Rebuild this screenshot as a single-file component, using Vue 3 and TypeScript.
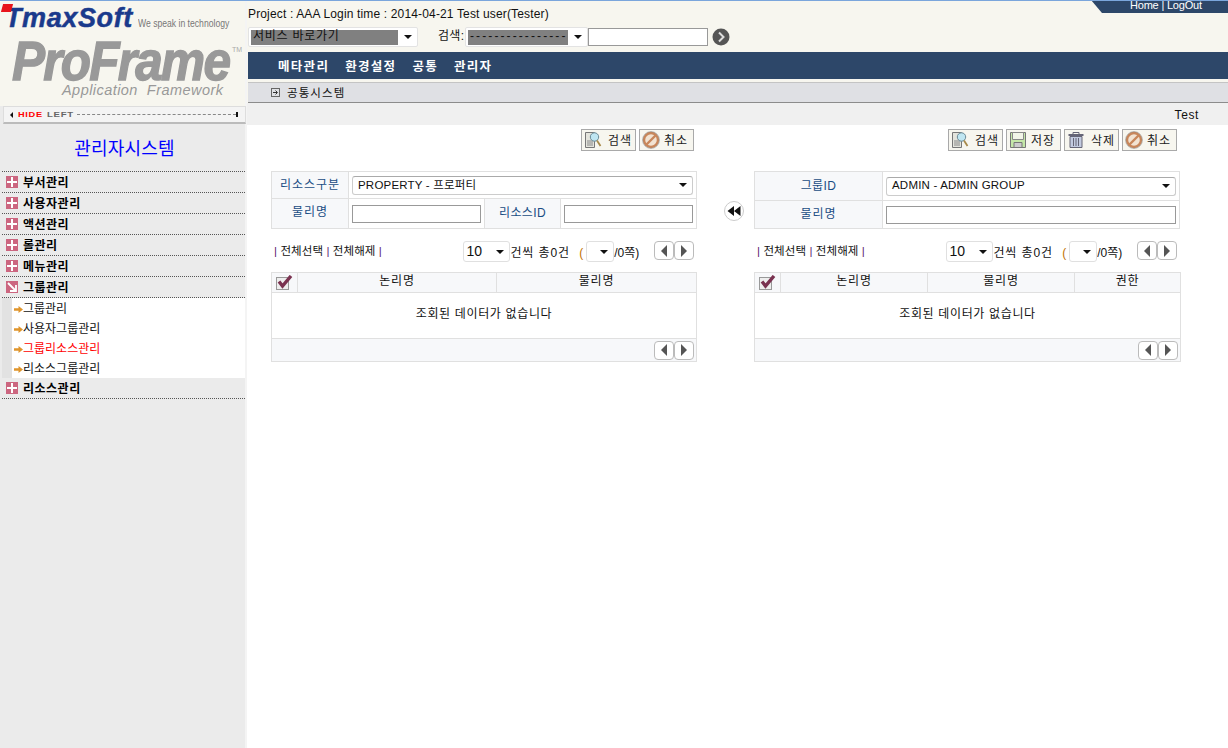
<script setup lang="ts">
interface Btn { label: string; icon: string }
const menusTop: string[] = ['부서관리', '사용자관리', '액션관리', '롤관리', '메뉴관리']
const subs: { label: string; active?: boolean }[] = [
  { label: '그룹관리' },
  { label: '사용자그룹관리' },
  { label: '그룹리소스관리', active: true },
  { label: '리소스그룹관리' },
]
const navs: string[] = ['메타관리', '환경설정', '공통', '관리자']
const leftBtns: Btn[] = [
  { label: '검색', icon: 'search' },
  { label: '취소', icon: 'cancel' },
]
const rightBtns: Btn[] = [
  { label: '검색', icon: 'search' },
  { label: '저장', icon: 'save' },
  { label: '삭제', icon: 'trash' },
  { label: '취소', icon: 'cancel' },
]
const panels = [
  { cols: [{ t: '논리명', w: 199 }, { t: '물리명', w: 200 }] },
  { cols: [{ t: '논리명', w: 147 }, { t: '물리명', w: 147 }, { t: '권한', w: 106 }] },
]
</script>

<template>
  <div class="page">
    <aside class="side">
      <div class="logo">
        <div class="tmax-row">
          <i class="red-mark"></i>
          <span class="tmax">TmaxSoft</span>
          <span class="slogan">We speak in technology</span>
        </div>
        <div class="pf-row">
          <span class="pf">ProFrame</span>
          <span class="tm">TM</span>
        </div>
        <div class="appfw">Application&nbsp; Framework</div>
      </div>
      <div class="hidebar">
        <i class="tri-l"></i>
        <b class="hide">HIDE</b>
        <b class="left">LEFT</b>
        <i class="dash"></i>
        <i class="endmark"></i>
      </div>
      <h1 class="sys">관리자시스템</h1>
      <nav class="menu">
        <div v-for="m in menusTop" :key="m" class="mrow">
          <svg class="micon" width="12" height="12" viewBox="0 0 12 12"><rect width="12" height="12" fill="#cc6680"/><path d="M5 1h2v4h4v2H7v4H5V7H1V5h4z" fill="#fff"/></svg>
          <span>{{ m }}</span>
        </div>
        <div class="mrow">
          <svg class="micon" width="12" height="12" viewBox="0 0 12 12"><rect width="12" height="12" fill="#cc6680"/><path d="M2 2l7 7M10 4v6H4" fill="none" stroke="#fff" stroke-width="1.800"/></svg>
          <span>그룹관리</span>
        </div>
        <ul class="subs">
          <li v-for="s in subs" :key="s.label" :class="{ on: s.active }">
            <svg width="9" height="7" viewBox="0 0 9 7"><path d="M0 2.200h4.500V0L9 3.500 4.500 7V4.800H0z" fill="#e0952c"/></svg>
            <span>{{ s.label }}</span>
          </li>
        </ul>
        <div class="mrow">
          <svg class="micon" width="12" height="12" viewBox="0 0 12 12"><rect width="12" height="12" fill="#cc6680"/><path d="M5 1h2v4h4v2H7v4H5V7H1V5h4z" fill="#fff"/></svg>
          <span>리소스관리</span>
        </div>
      </nav>
    </aside>

    <div class="content">
      <header class="head">
        <div class="info">Project : AAA Login time : 2014-04-21 Test user(Tester)</div>
        <div class="tools">
          <div class="sel svc"><span class="hl">서비스 바로가기</span></div>
          <span class="slabel">검색:</span>
          <div class="sel kind"><span class="hl">----------------</span></div>
          <input class="sinput" type="text" />
          <span class="go"><svg width="18" height="18" viewBox="0 0 18 18"><circle cx="9" cy="9" r="8.500" fill="#555"/><path d="M7 4.500l4.500 4.500L7 13.500" fill="none" stroke="#ddd" stroke-width="2"/></svg></span>
        </div>
        <div class="navbar">
          <a v-for="n in navs" :key="n">{{ n }}</a>
        </div>
        <div class="subnav">
          <svg width="9" height="9" viewBox="0 0 9 9"><rect x=".5" y=".5" width="8" height="8" fill="none" stroke="#666"/><path d="M2 4.500h4M4.500 2.500l2 2-2 2" fill="none" stroke="#333"/></svg>
          <span>공통시스템</span>
        </div>
        <div class="corner">
          <span>Home | LogOut</span>
        </div>
      </header>
      <div class="titlebar">Test</div>

      <main class="main">
        <template v-for="(p, pi) in panels" :key="pi">
          <section class="panel">
            <div class="actions">
              <button v-for="b in (pi === 0 ? leftBtns : rightBtns)" :key="b.label" class="btn" :class="b.icon" type="button">
                <svg v-if="b.icon === 'search'" width="18" height="18" viewBox="0 0 18 18"><path d="M1.500 1.500h9v15h-9z" fill="#e4e4dc" stroke="#777"/><path d="M3 10h6M3 12h6M3 14h6" stroke="#888"/><circle cx="10.500" cy="6" r="4.200" fill="#bfe6f2" stroke="#6b8a96"/><path d="M13 9.500l3.500 5.500" stroke="#a88a4a" stroke-width="1.800"/></svg>
                <svg v-else-if="b.icon === 'cancel'" width="18" height="18" viewBox="0 0 18 18"><circle cx="9" cy="9" r="7" fill="#f2e3d2" stroke="#c8865a" stroke-width="2.400"/><path d="M4.500 13.500l9-9" stroke="#c8865a" stroke-width="2.400"/><circle cx="9" cy="9" r="8.400" fill="none" stroke="#888" stroke-width=".6"/></svg>
                <svg v-else-if="b.icon === 'save'" width="18" height="18" viewBox="0 0 18 18"><path d="M1.500 1.500h15v15h-15z" fill="#c5e8a8" stroke="#777"/><path d="M3.500 1.500h11v7h-11z" fill="#f2f5e8" stroke="#888"/><path d="M5 16.500v-5h8v5z" fill="#ccc" stroke="#777"/></svg>
                <svg v-else width="18" height="18" viewBox="0 0 18 18"><path d="M1.500 4h15" stroke="#667" stroke-width="2"/><path d="M6 3V1.500h6V3" fill="none" stroke="#667"/><path d="M3 5.500h12v11H3z" fill="#c3cbe0" stroke="#667"/><path d="M6.500 7v8M9 7v8M11.500 7v8" stroke="#667"/></svg>
                <span>{{ b.label }}</span>
              </button>
            </div>

            <table v-if="pi === 0" class="form">
              <colgroup><col style="width:77px"/><col style="width:136px"/><col style="width:76px"/><col /></colgroup>
              <tbody>
                <tr class="r1">
                  <th>리소스구분</th>
                  <td colspan="3"><div class="sel fsel"><span>PROPERTY - 프로퍼티</span></div></td>
                </tr>
                <tr class="r2">
                  <th>물리명</th>
                  <td><input class="inp" type="text" /></td>
                  <th class="tight">리소스ID</th>
                  <td><input class="inp" type="text" /></td>
                </tr>
              </tbody>
            </table>
            <table v-else class="form">
              <colgroup><col style="width:128px"/><col /></colgroup>
              <tbody>
                <tr class="r1b">
                  <th class="tight">그룹ID</th>
                  <td><div class="sel fsel"><span>ADMIN - ADMIN GROUP</span></div></td>
                </tr>
                <tr class="r2b">
                  <th>물리명</th>
                  <td><input class="inp" type="text" /></td>
                </tr>
              </tbody>
            </table>

            <div class="pager">
              <div class="links"><i>|</i> 전체선택 <i>|</i> 전체해제 <i>|</i></div>
              <div class="sel psize"><span>10</span></div>
              <span class="cnt">건씩 총0건</span>
              <span class="paren">(</span>
              <div class="sel pnum"></div>
              <span class="of">/0쪽)</span>
              <div class="arrows">
                <button class="ar" type="button"><i class="t-l"></i></button>
                <button class="ar" type="button"><i class="t-r"></i></button>
              </div>
            </div>

            <table class="grid">
              <colgroup><col style="width:26px"/><col v-for="c in p.cols" :key="c.t" :style="{ width: c.w + 'px' }"/></colgroup>
              <thead>
                <tr>
                  <th class="chk">
                    <svg width="17" height="15" viewBox="0 0 17 15"><rect x=".5" y="2.500" width="12" height="12" fill="#eee" stroke="#999"/><path d="M3 6.500l3.500 4.500L15 1" fill="none" stroke="#7a3250" stroke-width="3.400"/></svg>
                  </th>
                  <th v-for="c in p.cols" :key="c.t">{{ c.t }}</th>
                </tr>
              </thead>
              <tbody>
                <tr class="empty"><td :colspan="p.cols.length + 1">조회된 데이터가 없습니다</td></tr>
                <tr class="foot">
                  <td :colspan="p.cols.length + 1">
                    <div class="arrows">
                      <button class="ar" type="button"><i class="t-l"></i></button>
                      <button class="ar" type="button"><i class="t-r"></i></button>
                    </div>
                  </td>
                </tr>
              </tbody>
            </table>
          </section>
          <div v-if="pi === 0" class="mover">
            <svg width="20" height="20" viewBox="0 0 20 20"><circle cx="10" cy="10" r="9.500" fill="#fff" stroke="#ccc"/><path d="M10 5v10L3.500 10zM16.500 5v10L10 10z" fill="#111"/></svg>
          </div>
        </template>
      </main>
    </div>
  </div>
</template>

<style>
html, body { margin: 0; padding: 0; background: #fff; }
</style>

<style scoped>
* { box-sizing: border-box; }
.page {
  width: 1228px; height: 748px; display: flex; overflow: hidden; background: #fff;
  font-family: "Liberation Sans", "Noto Sans CJK KR", sans-serif; font-size: 12px; color: #111;
  border-top: 1px solid #7ba6dc;
}
.side { width: 247px; flex: none; background: #ebebeb; border-right: 2px solid #f4f4f4; padding-left: 2px; position: relative; }
.logo { height: 105px; margin-left: -2px; background: #f7f6ef; padding: 6px 0 0 5px; overflow: hidden; }
.tmax-row { display: flex; align-items: flex-end; height: 23px; position: relative; }
.red-mark { position: absolute; left: -3px; top: -3px; width: 10px; height: 8px; background: #e8141c; transform: skewX(-15deg); }
.tmax { flex: none; font-weight: 700; font-style: italic; font-size: 27px; line-height: 23px; color: #1a3a8c; letter-spacing: .6px; width: 133px; -webkit-text-stroke: .5px #1a3a8c; white-space: nowrap; }
.slogan { font-size: 10.500px; color: #777; line-height: 13px; transform: scaleX(.82); transform-origin: left; white-space: nowrap; }
.pf-row { display: flex; margin: 9px 0 0 7px; height: 43px; }
.pf { flex: none; font-weight: 700; font-style: italic; font-size: 56px; line-height: 43px; color: #999; letter-spacing: -2px; width: 220px; white-space: nowrap; transform: scaleX(.885); transform-origin: left; -webkit-text-stroke: 1.400px #999; }
.tm { font-size: 7px; color: #aaa; line-height: 10px; margin-top: 6px; }
.appfw { font-style: italic; font-size: 14.500px; line-height: 14px; color: #999; margin: 1px 0 0 57px; letter-spacing: .45px; white-space: nowrap; }
.hidebar {
  height: 18px; margin: 0 0 0 1px; width: 243px; background: #f4f4f4; border: 1px solid #ddd; border-bottom: 2px solid #bbb;
  display: flex; align-items: center; padding: 0 7px 0 6px; font-size: 8px; letter-spacing: .6px;
}
.tri-l { width: 0; height: 0; border: 3px solid transparent; border-right: 3px solid #111; border-left: 0; margin-right: 5px; }
.hide { color: #f00; margin-right: 5px; transform: scaleX(1.150); transform-origin: left; width: 24px; }
.left { color: #666; transform: scaleX(1.200); transform-origin: left; width: 30px; }
.dash { flex: 1; border-top: 1px dashed #888; }
.endmark { width: 2px; height: 5px; background: #111; }
.sys { margin: 0; height: 48px; line-height: 46px; text-align: center; color: #00f; font-size: 18px; font-weight: 400; padding: 2px 0 0 2px; letter-spacing: .2px; border-bottom: 1px dotted #555; }
.menu { display: block; }
.mrow { height: 21px; border-bottom: 1px dotted #555; display: flex; align-items: center; padding-left: 4px; font-weight: 700; letter-spacing: .5px; font-size: 12px; color: #000; }
.mrow span { margin-top: -2px; }
.micon { margin-right: 5px; flex: none; }
.subs { list-style: none; margin: 0; padding: 0 0 0 10px; height: 80px; background: #fff; box-shadow: inset 10px 0 0 #e2e2e2; }
.subs li { height: 20px; display: flex; align-items: center; padding-left: 2px; background: #fff; }
.subs li span { margin-top: -2px; margin-left: -1px; }
.subs li svg { margin-right: 1px; margin-top: 2px; flex: none; }
.subs li.on { color: #f00; }

.content { flex: 1; min-width: 0; display: flex; flex-direction: column; }
.head { height: 102px; background: #f7f6ef; padding-left: 1px; position: relative; }
.info { height: 23px; line-height: 26px; font-size: 12px; white-space: nowrap; letter-spacing: .15px; }
.tools { height: 28px; display: flex; align-items: flex-start; padding-top: 3px; }
.sel { position: relative; background: #fff; border: 1px solid #e3e3e3; border-radius: 2px; display: flex; align-items: center; white-space: nowrap; }
.sel::after { content: ""; position: absolute; right: 5px; top: 50%; margin-top: -2px; border: 4px solid transparent; border-top: 4px solid #111; border-bottom: 0; }
.hl { background: #808080; height: 15px; line-height: 13px; display: block; padding-left: 2px; }
.svc { width: 170px; height: 20px; padding-left: 2px; }
.svc .hl { width: 147px; letter-spacing: .75px; }
.slabel { margin-left: 20px; width: 27px; line-height: 19px; letter-spacing: .3px; white-space: nowrap; }
.kind { width: 123px; height: 20px; padding-left: 2px; }
.kind .hl { width: 100px; letter-spacing: 2.100px; overflow: hidden; }
.sinput { width: 120px; height: 18px; margin-top: 1px; border: 1px solid #999; background: #fff; padding: 0; }
.go { margin: 1px 0 0 4px; height: 18px; }
.navbar { height: 27px; margin-top: 0; background: #2d4769; display: flex; align-items: center; padding-left: 30px; gap: 16px; color: #fff; font-weight: 700; font-size: 12.500px; letter-spacing: 1.300px; }
.subnav { height: 21px; margin-top: 3px; border-top: 1px solid #c4c4c4; border-bottom: 1px solid #8c8c8c; background: #dfe0e4; display: flex; align-items: center; padding-left: 23px; gap: 7px; font-size: 11.500px; letter-spacing: 1.100px; }
.subnav span { margin-top: -2px; }
.corner {
  position: absolute; right: 0; top: -1px; width: 137px; height: 13px; background: #2d4769; color: #fff;
  clip-path: polygon(0 0, 100% 0, 100% 100%, 11px 100%);
  font-size: 11px; letter-spacing: -.2px; line-height: 10px; padding-left: 39px; white-space: nowrap;
}
.titlebar { height: 22px; background: #f0f0f0; text-align: right; padding-right: 29px; line-height: 25px; font-size: 12px; letter-spacing: .6px; }

.main { flex: 1; background: #fff; display: flex; align-items: flex-start; padding-left: 24px; }
.panel { width: 426px; flex: none; }
.mover { width: 57px; flex: none; padding: 76px 0 0 27px; line-height: 0; }
.actions { height: 46px; padding: 4px 3px 0 0; display: flex; justify-content: flex-end; gap: 3px; }
.btn { width: 55px; flex: none; height: 22px; border: 1px solid #a9a9a9; background: #f7f6ef; padding: 0 2px; margin: 0; display: flex; align-items: center; gap: 4px; font: inherit; color: #222; letter-spacing: 1px; white-space: nowrap; }
.btn span { margin-top: -2px; }
.btn.search span { margin-left: 2px; }
.btn.trash span { margin-left: 2px; }

.form { width: 426px; border-collapse: collapse; table-layout: fixed; }
.form th, .form td { border: 1px solid #e0e0e0; padding: 0 3px; }
.form th { background: #f7f8fa; color: #1a4d84; font-weight: 400; letter-spacing: 1px; padding-bottom: 4px; }
.r2 th { padding-bottom: 6px; }
.form th.tight { letter-spacing: .4px; }
.r2 th.tight { padding-bottom: 4px; }
.r1 { height: 27px; } .r2 { height: 30px; } .r1b { height: 29px; } .r2b { height: 28px; }
.fsel { height: 19px; border-color: #ccc; border-top-color: #aaa; border-radius: 3px; padding-left: 5px; font-size: 11.500px; letter-spacing: .2px; }
.fsel span { margin-top: -2px; }
.inp { display: block; width: 100%; height: 18px; border: 1px solid #999; background: #fff; padding: 0; }

.pager { height: 31px; margin-top: 12px; display: flex; align-items: flex-start; }
.links { width: 192px; padding-left: 3px; line-height: 21px; font-size: 11.500px; letter-spacing: .1px; white-space: pre; }
.links i { font-style: normal; color: #5a2070; }
.psize { width: 48px; height: 21px; padding-left: 3px; font-size: 14px; border-color: #e0e0e0; border-radius: 3px; }
.psize span { margin-top: -2px; }
.cnt { line-height: 24px; margin-left: 0; letter-spacing: .9px; width: 69px; white-space: nowrap; }
.paren { line-height: 24px; color: #c07000; width: 7px; }
.pnum { width: 28px; height: 21px; border-color: #e0e0e0; border-radius: 3px; }
.of { line-height: 24px; width: 40px; white-space: nowrap; }
.arrows { display: flex; margin-left: auto; margin-right: 3px; }
.ar { width: 20px; height: 19px; background: #fff; border: 1px solid #bbb; border-radius: 4px; padding: 0; display: flex; align-items: center; justify-content: center; }
.t-l { border: 6px solid transparent; border-right: 6px solid #555; border-left: 0; }
.t-r { border: 6px solid transparent; border-left: 6px solid #555; border-right: 0; }

.grid { width: 426px; border-collapse: collapse; table-layout: fixed; line-height: 14px; }
.grid th, .grid td { border: 1px solid #e0e0e0; padding: 0; }
.grid thead tr { height: 20px; }
.grid th { background: #f7f8fa; font-weight: 400; text-align: center; letter-spacing: .8px; padding-bottom: 3px; }
.chk { line-height: 0; }
.grid th.chk { padding-bottom: 1px; }
.empty { height: 46px; }
.empty td { text-align: center; letter-spacing: .65px; padding-bottom: 3px; }
.foot { height: 23px; }
.foot td { background: #f7f8fa; padding: 0; }
.foot .arrows { justify-content: flex-end; margin-right: 2px; }
</style>
